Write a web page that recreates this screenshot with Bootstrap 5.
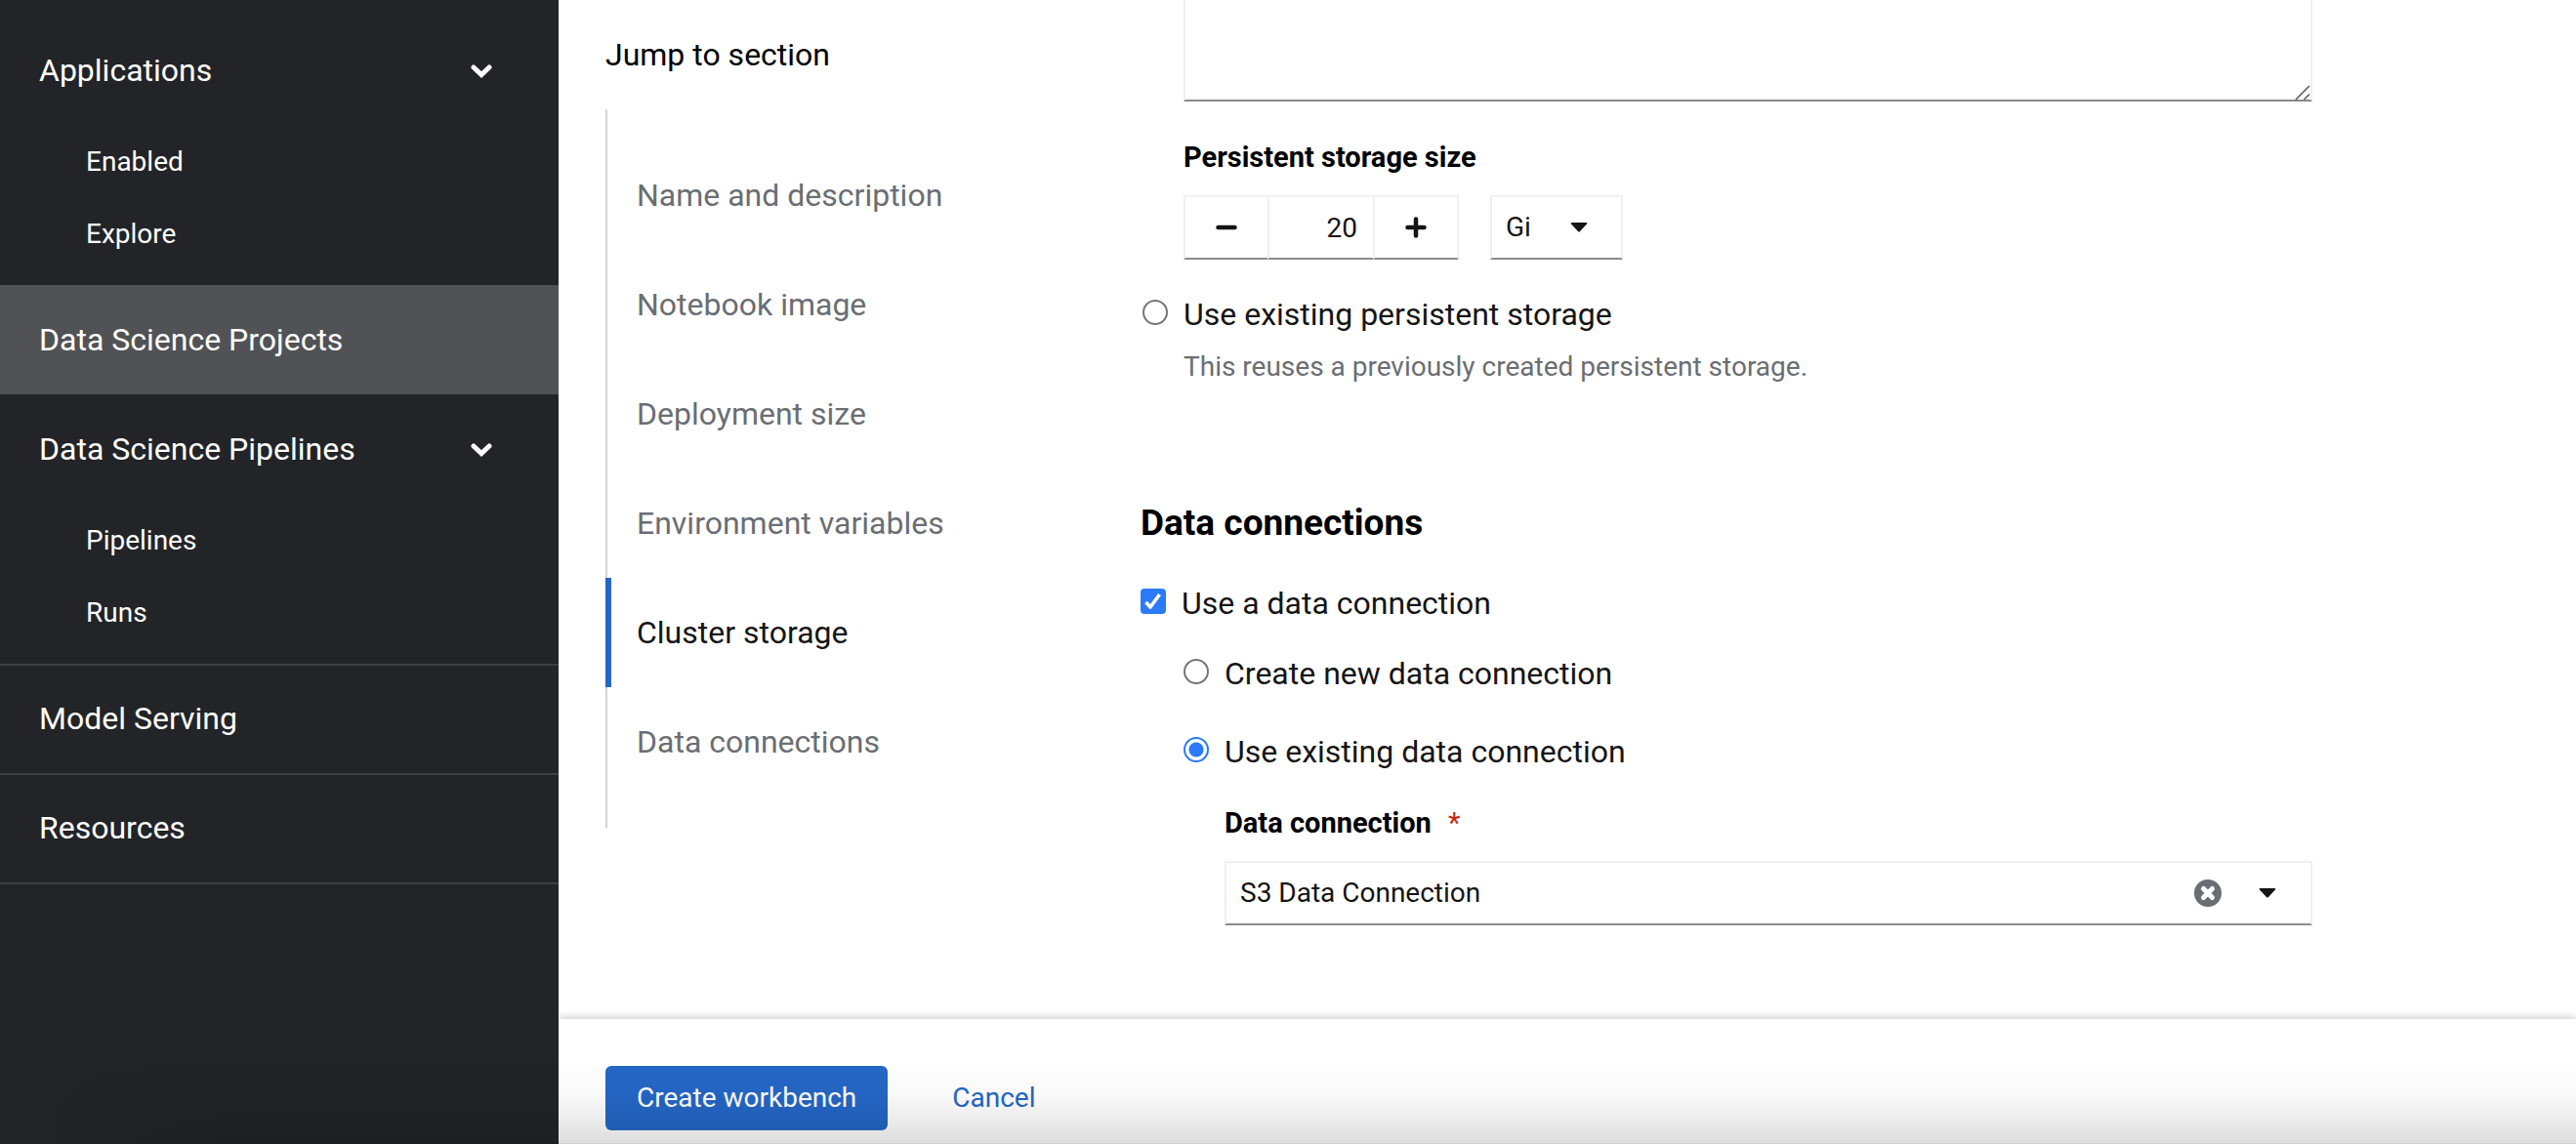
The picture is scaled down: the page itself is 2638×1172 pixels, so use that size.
<!DOCTYPE html>
<html lang="en">
<head>
<meta charset="utf-8">
<meta name="viewport" content="width=device-width, initial-scale=1">
<title>Create workbench</title>
<link href="https://cdn.jsdelivr.net/npm/bootstrap@5.3.0/dist/css/bootstrap.min.css" rel="stylesheet">
<style>
  body { font-family: Roboto, "Liberation Sans", sans-serif; font-size: 32px; line-height: 48px; color: #151515; background: #fff; }
  .text-28 { font-size: 28px; line-height: 42px; }
  .field-label { font-size: 29px; line-height: 42px; font-weight: 700; color: #000; margin-bottom: 18px; }

  /* sidebar */
  .sidebar { width: 572px; background: #222427; padding-top: 16px; }
  .sidebar a, .sidebar button { color: #fff; text-decoration: none; }
  .side-item { padding: 32px 68px 32px 40px; }
  .side-item.active { background: #515255; }
  .side-line { border-bottom: 2px solid #3c3f42; padding-top: 30px; }
  .side-sub { padding: 17px 40px 15px 88px; }
  .side-group { padding-bottom: 16px; }
  .side-group.ruled { border-bottom: 2px solid #3c3f42; }

  /* section navigation */
  .jump-nav { width: 548px; padding-top: 32px; }
  .jump-list { border-left: 2px solid #d2d2d2; margin-top: 32px; padding: 32px 0; }
  .jump-list a { color: #6a6e73; text-decoration: none; padding: 32px 30px; }
  .jump-list a.active { color: #151515; border-left: 6px solid #2567c6; margin-left: -2px; padding-left: 26px; }

  /* form */
  .page-body { padding-left: 48px; }
  .form-col { max-width: 1200px; }
  .indent { padding-left: 44px; }
  .size-group { padding-top: 36px; }
  .field-box { border: 2px solid #f0f0f0; border-bottom-color: #8a8a91; background: #fff; height: 66px; }
  .field-box + .field-box { margin-left: -2px; }
  .step-btn { width: 88px; }
  .size-input { width: 110px; padding: 0 16px; appearance: textfield; color: #151515; outline: 0; border-radius: 0; }
  .size-input::-webkit-inner-spin-button { appearance: none; }
  .unit-box { width: 136px; padding-right: 34px; }
  .field-box select { appearance: none; border: 0; background: transparent; color: #151515; padding: 0 0 0 14px; outline: 0; }
  .notes { height: 104px; border: 2px solid #f0f0f0; border-top: 0; border-bottom-color: #8a8a91; resize: none; outline: 0; }
  .grip { right: 2px; bottom: 1px; }
  .choice { gap: 16px; }
  .choice-next { margin-top: 32px; }
  .choice-storage { padding-left: 2px; }
  .choice input { appearance: none; flex: none; width: 26px; height: 26px; margin: 9px 0 0; background: #fff; border: 2px solid #767676; }
  .choice input[type=radio] { border-radius: 50%; }
  .choice input[type=radio]:checked { border-color: #2b7af8; background: radial-gradient(circle, #2b7af8 0 7px, #fff 8px); }
  .choice input[type=checkbox] { border-radius: 4px; }
  .choice input[type=checkbox]:checked { border-color: #2b7af8; background: #2b7af8 url("data:image/svg+xml,%3Csvg xmlns='http://www.w3.org/2000/svg' viewBox='0 0 22 22'%3E%3Cpath d='M3.500 12 8 17 17.500 4' fill='none' stroke='white' stroke-width='3.600' stroke-linejoin='round'/%3E%3C/svg%3E") center / 22px; }
  .help { color: #6a6e73; margin-top: 9px; }
  .section-title { font-size: 37px; line-height: 48px; font-weight: 700; color: #000; margin: 115px 0 34px; }
  .required { color: #c0271b; padding-left: 10px; }
  .connection-field { padding: 28px 0 0 42px; }
  .connection-box { padding-right: 35px; }
  .box-tools { gap: 38px; }

  /* action bar */
  .action-bar { gap: 34px; padding: 48px 48px 14px; background: #fff; box-shadow: 0 -2px 8px rgba(0, 0, 0, .2); clip-path: inset(-12px 0 0 0); }
  .action-bar .btn { font-size: 28px; line-height: 42px; padding: 12px 32px; border: 0; border-radius: 6px; }
  .btn-create, .btn-create:hover { background: #2567c6; color: #fff; }
  .btn-cancel, .btn-cancel:hover { color: #2567c6; }
  .bottom-shade { height: 88px; pointer-events: none; border-bottom: 1px solid rgba(0, 0, 0, .18);
    background: linear-gradient(rgba(0,0,0,0), rgba(0,0,0,.02) 40%, rgba(0,0,0,.07) 70%, rgba(0,0,0,.13));
    -webkit-mask-image: linear-gradient(90deg, transparent 50px, #000 240px); mask-image: linear-gradient(90deg, transparent 50px, #000 240px); }
</style>
<script src="https://cdn.jsdelivr.net/npm/bootstrap@5.3.0/dist/js/bootstrap.bundle.min.js"></script>
</head>
<body class="d-flex vh-100 overflow-hidden">

<nav class="sidebar flex-shrink-0" aria-label="Main">
  <div class="side-group">
    <button type="button" class="side-item d-flex justify-content-between align-items-center w-100 border-0 bg-transparent text-start" aria-expanded="true">
      Applications
      <svg width="22" height="15" viewBox="0 0 22 15" aria-hidden="true"><path d="M3 4l8 7.500L19 4" fill="none" stroke="#fff" stroke-width="5" stroke-linecap="round"/></svg>
    </button>
    <a href="#" class="side-sub text-28 d-block">Enabled</a>
    <a href="#" class="side-sub text-28 d-block">Explore</a>
  </div>
  <a href="#" class="side-item active d-block" aria-current="page">Data Science Projects</a>
  <div class="side-group ruled">
    <button type="button" class="side-item d-flex justify-content-between align-items-center w-100 border-0 bg-transparent text-start" aria-expanded="true">
      Data Science Pipelines
      <svg width="22" height="15" viewBox="0 0 22 15" aria-hidden="true"><path d="M3 4l8 7.500L19 4" fill="none" stroke="#fff" stroke-width="5" stroke-linecap="round"/></svg>
    </button>
    <a href="#" class="side-sub text-28 d-block">Pipelines</a>
    <a href="#" class="side-sub text-28 d-block">Runs</a>
  </div>
  <a href="#" class="side-item side-line d-block">Model Serving</a>
  <a href="#" class="side-item side-line d-block">Resources</a>
</nav>

<main class="d-flex flex-column flex-grow-1">
  <div class="page-body d-flex flex-grow-1 overflow-hidden">
    <nav class="jump-nav flex-shrink-0" aria-label="Jump to section">
      <div class="text-black">Jump to section</div>
      <div class="jump-list d-flex flex-column">
        <a href="#name">Name and description</a>
        <a href="#image">Notebook image</a>
        <a href="#size">Deployment size</a>
        <a href="#env">Environment variables</a>
        <a href="#storage" class="active">Cluster storage</a>
        <a href="#connections">Data connections</a>
      </div>
    </nav>

    <form id="workbench" class="form-col flex-grow-1">
      <section id="storage">
        <div class="indent">
          <div class="position-relative d-flex">
            <textarea class="notes w-100" aria-label="Description"></textarea>
            <svg class="grip position-absolute" width="16" height="16" viewBox="0 0 16 16" aria-hidden="true"><path d="M1 15L15 1M9.500 15L15 9.500" stroke="#555" stroke-width="1.500" fill="none"/></svg>
          </div>
          <div class="size-group">
            <label for="size-value" class="field-label d-block">Persistent storage size</label>
            <div class="d-flex text-28">
              <button type="button" class="field-box step-btn d-flex align-items-center justify-content-center" aria-label="Minus">
                <svg width="22" height="22" viewBox="0 0 22 22" aria-hidden="true"><path d="M2.500 11h17" stroke="#151515" stroke-width="4.500" stroke-linecap="round"/></svg>
              </button>
              <input id="size-value" type="number" class="field-box size-input text-end" value="20">
              <button type="button" class="field-box step-btn d-flex align-items-center justify-content-center" aria-label="Plus">
                <svg width="22" height="22" viewBox="0 0 22 22" aria-hidden="true"><path d="M2.500 11h17M11 2.500v17" stroke="#151515" stroke-width="4.500" stroke-linecap="round"/></svg>
              </button>
              <div class="ps-4 ms-2">
                <div class="field-box unit-box d-flex align-items-center">
                  <select class="w-100" aria-label="Unit"><option>Gi</option><option>Mi</option></select>
                  <svg class="flex-shrink-0" width="18" height="10" viewBox="0 0 18 10" aria-hidden="true"><path d="M1.500 0h15q1.500.4.500 1.500L10 9q-1 1-2 0L1 1.500Q0 .4 1.500 0z" fill="#151515"/></svg>
                </div>
              </div>
            </div>
          </div>
        </div>
        <div class="choice choice-next choice-storage d-flex align-items-start">
          <input type="radio" name="storage" id="existing-storage">
          <label for="existing-storage">Use existing persistent storage</label>
        </div>
        <div class="indent"><div class="help text-28">This reuses a previously created persistent storage.</div></div>
      </section>

      <section id="connections">
        <h2 class="section-title">Data connections</h2>
        <div class="choice d-flex align-items-start">
          <input type="checkbox" id="use-connection" checked>
          <label for="use-connection">Use a data connection</label>
        </div>
        <div class="indent pt-4">
          <div class="choice d-flex align-items-start">
            <input type="radio" name="connection" id="new-connection">
            <label for="new-connection">Create new data connection</label>
          </div>
          <div class="choice choice-next d-flex align-items-start">
            <input type="radio" name="connection" id="existing-connection" checked>
            <label for="existing-connection">Use existing data connection</label>
          </div>
          <div class="connection-field">
            <label for="connection-name" class="field-label d-block">Data connection <span class="required fw-normal">*</span></label>
            <div class="field-box connection-box d-flex align-items-center text-28">
              <select id="connection-name" class="flex-grow-1"><option>S3 Data Connection</option></select>
              <div class="box-tools d-flex align-items-center">
                <button type="button" class="border-0 bg-transparent p-0 d-flex" aria-label="Clear">
                  <svg width="28" height="28" viewBox="0 0 28 28" aria-hidden="true"><circle cx="14" cy="14" r="14" fill="#6a6e73"/><path d="M9.500 9.500l9 9M18.500 9.500l-9 9" stroke="#fff" stroke-width="5" stroke-linecap="round"/></svg>
                </button>
                <svg width="18" height="10" viewBox="0 0 18 10" aria-hidden="true"><path d="M1.500 0h15q1.500.4.500 1.500L10 9q-1 1-2 0L1 1.500Q0 .4 1.500 0z" fill="#151515"/></svg>
              </div>
            </div>
          </div>
        </div>
      </section>
    </form>
  </div>

  <footer class="action-bar d-flex position-relative">
    <button type="submit" form="workbench" class="btn btn-create">Create workbench</button>
    <button type="button" class="btn btn-cancel">Cancel</button>
  </footer>
</main>

<div class="bottom-shade fixed-bottom"></div>
</body>
</html>
